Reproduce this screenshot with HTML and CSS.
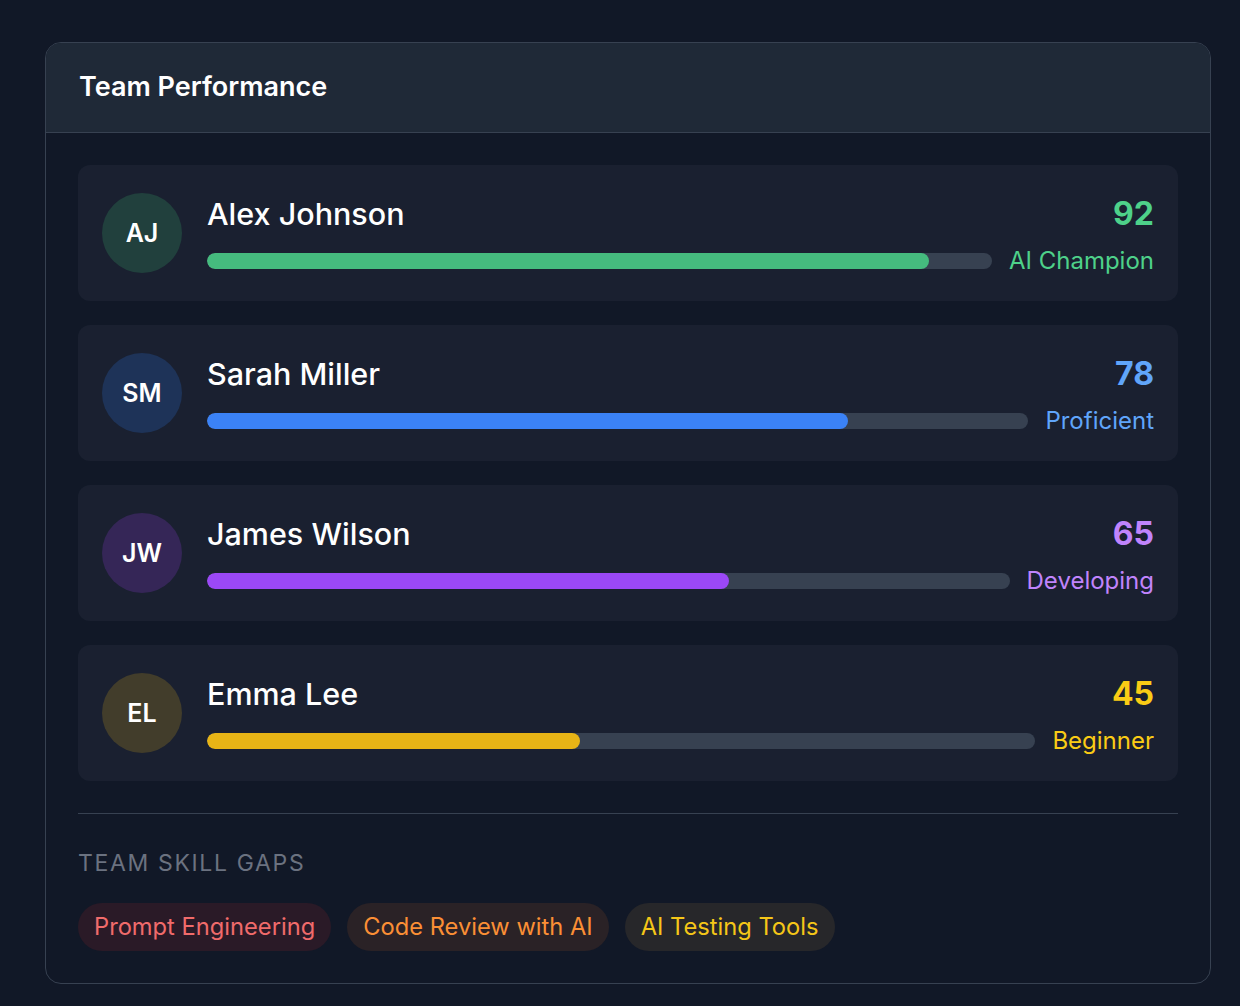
FILE: index.html
```html
<!DOCTYPE html>
<html lang="en">
<head>
<meta charset="utf-8">
<title>Team Performance</title>
<link rel="stylesheet" href="styles.css">
</head>
<body>
<div class="card">
  <div class="card-header">
    <h2 class="title">Team Performance</h2>
  </div>
  <div class="card-body">
    <div class="rows">
      <div class="row">
        <div class="avatar av-green">AJ</div>
        <div class="content">
          <div class="line1"><span class="name">Alex Johnson</span><span class="score t-green">92</span></div>
          <div class="line2"><div class="track"><div class="fill f-green" style="width:92%"></div></div><span class="level t-green">AI Champion</span></div>
        </div>
      </div>
      <div class="row">
        <div class="avatar av-blue">SM</div>
        <div class="content">
          <div class="line1"><span class="name">Sarah Miller</span><span class="score t-blue">78</span></div>
          <div class="line2"><div class="track"><div class="fill f-blue" style="width:78%"></div></div><span class="level t-blue">Proficient</span></div>
        </div>
      </div>
      <div class="row">
        <div class="avatar av-purple">JW</div>
        <div class="content">
          <div class="line1"><span class="name">James Wilson</span><span class="score t-purple">65</span></div>
          <div class="line2"><div class="track"><div class="fill f-purple" style="width:65%"></div></div><span class="level t-purple">Developing</span></div>
        </div>
      </div>
      <div class="row">
        <div class="avatar av-yellow">EL</div>
        <div class="content">
          <div class="line1"><span class="name">Emma Lee</span><span class="score t-yellow">45</span></div>
          <div class="line2"><div class="track"><div class="fill f-yellow" style="width:45%"></div></div><span class="level t-yellow">Beginner</span></div>
        </div>
      </div>
    </div>
    <div class="gaps">
      <div class="gaps-title">TEAM SKILL GAPS</div>
      <div class="tags">
        <span class="tag tag-red">Prompt Engineering</span>
        <span class="tag tag-orange">Code Review with AI</span>
        <span class="tag tag-yellow">AI Testing Tools</span>
      </div>
    </div>
  </div>
</div>
</body>
</html>
```

FILE: styles.css
```css
* { box-sizing: border-box; }
html, body { margin: 0; padding: 0; }
body {
  background: #111827;
  font-family: Inter, "Noto Sans", "Liberation Sans", sans-serif;
  color: #f9fafb;
  padding: 42px 0 0 45px;
  min-height: 1006px;
}
.card {
  width: 1166px;
  border: 1px solid #374151;
  border-radius: 16px;
  overflow: hidden;
  background: #111827;
}
.card-header {
  background: #1f2937;
  border-bottom: 1px solid #374151;
  padding: 24px 33px 25px;
}
.title {
  margin: 0;
  font-size: 27px;
  line-height: 40px;
  font-weight: 600;
  color: #ffffff;
}
.card-body { padding: 32px; }
.rows { display: flex; flex-direction: column; gap: 24px; }
.row {
  display: flex;
  align-items: center;
  gap: 25px;
  padding: 24px;
  background: #1a2030;
  border-radius: 12px;
}
.avatar {
  flex: none;
  width: 80px; height: 80px;
  border-radius: 50%;
  display: flex; align-items: center; justify-content: center;
  font-size: 25px; font-weight: 600; color: #ffffff;
}
.av-green { background: #21403d; }
.av-blue { background: #1e3358; }
.av-purple { background: #352657; }
.av-yellow { background: #423d2b; }
.content { flex: 1; display: flex; flex-direction: column; gap: 8px; }
.line1 { display: flex; justify-content: space-between; align-items: center; height: 48px; }
.name { font-size: 30.5px; font-weight: 500; color: #ffffff; }
.score { font-size: 32px; font-weight: 700; }
.line2 { display: flex; align-items: center; gap: 17px; height: 32px; }
.track { flex: 1; height: 16px; background: #374151; border-radius: 8px; overflow: hidden; }
.fill { height: 100%; border-radius: 8px; }
.level { font-size: 24px; line-height: 32px; }
.f-green { background: #45bb7e; }
.f-blue { background: #3b82f6; }
.f-purple { background: #9b48f6; }
.f-yellow { background: #e7b416; }
.t-green { color: #4ed18a; }
.t-blue { color: #60a5fa; }
.t-purple { color: #c084fc; }
.t-yellow { color: #facc15; }
.gaps {
  margin-top: 32px;
  border-top: 1px solid #374151;
  padding-top: 33px;
}
.gaps-title {
  font-size: 23px;
  line-height: 32px;
  letter-spacing: 1.65px;
  color: #6b7280;
  font-weight: 400;
}
.tags { display: flex; gap: 16px; margin-top: 24px; }
.tag {
  font-size: 23.7px;
  line-height: 32px;
  padding: 8px 16px;
  border-radius: 24px;
}
.tag-red { background: #2a1a27; color: #f06b6b; }
.tag-orange { background: #2a2226; color: #fb8f35; }
.tag-yellow { background: #27272a; color: #f5c618; }
```
